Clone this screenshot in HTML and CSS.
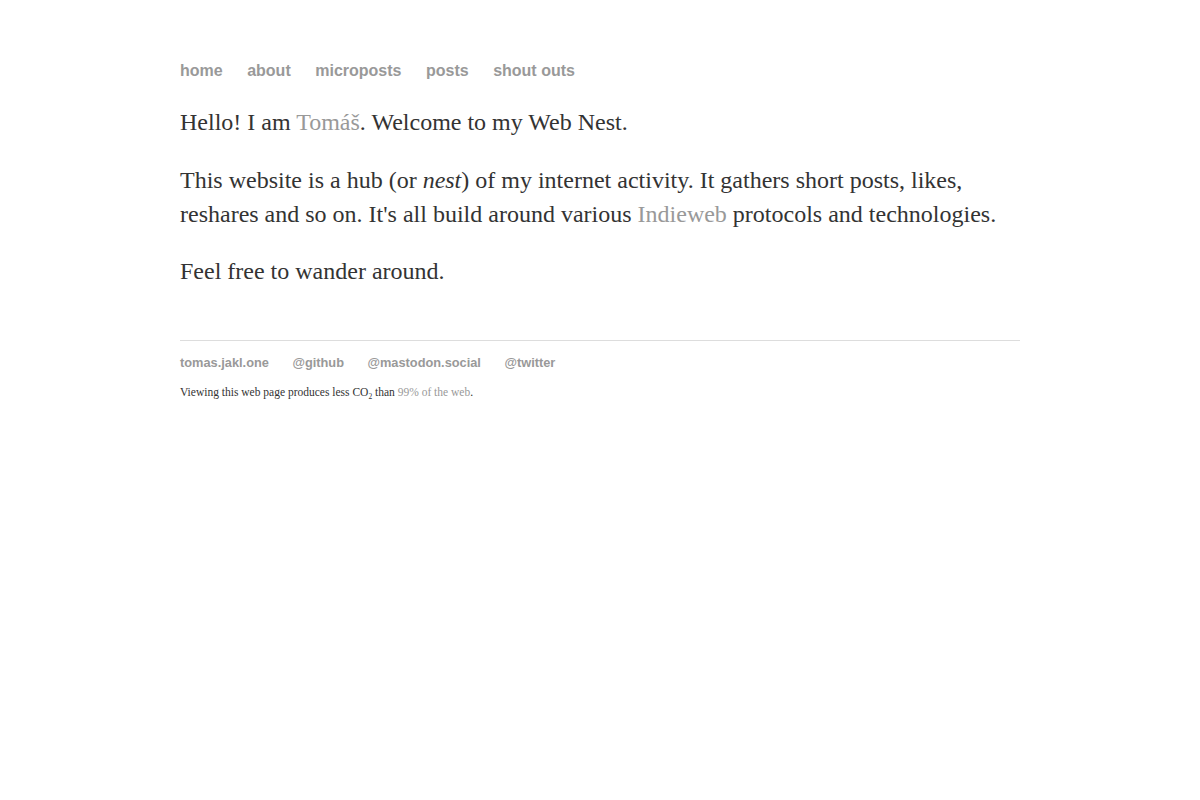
FILE: index.html
```html
<!DOCTYPE html>
<html lang="en">
<head>
<meta charset="utf-8">
<title>Tomáš's Web Nest</title>
<link rel="stylesheet" href="styles.css">
</head>
<body>
<div class="page">
  <nav class="nav">
    <a href="#">home</a>
    <a href="#">about</a>
    <a href="#">microposts</a>
    <a href="#">posts</a>
    <a href="#">shout outs</a>
  </nav>
  <main class="content">
    <p>Hello! I am <a href="#">Tomáš</a>. Welcome to my Web Nest.</p>
    <p class="hub">This website is a hub (or <em>nest</em>) of my internet activity. It gathers short posts, likes, reshares and so on. It's all build around various <a href="#">Indieweb</a> protocols and technologies.</p>
    <p class="last">Feel free to wander around.</p>
  </main>
  <footer class="footer">
    <div class="footer-links">
      <a href="#">tomas.jakl.one</a>
      <a href="#">@github</a>
      <a href="#">@mastodon.social</a>
      <a href="#">@twitter</a>
    </div>
    <p class="carbon">Viewing this web page produces less CO<sub>2</sub> than <a href="#">99% of the web</a>.</p>
  </footer>
</div>
</body>
</html>
```

FILE: styles.css
```css
html, body {
  margin: 0;
  padding: 0;
  background: #fff;
}
.page {
  width: 840px;
  margin: 0 auto;
  padding-top: 61px;
}
a {
  color: #999;
  text-decoration: none;
}
.nav {
  display: flex;
  gap: 24.5px;
  font-family: "Liberation Sans", Arial, sans-serif;
  font-weight: bold;
  font-size: 16px;
  line-height: 20px;
}
.nav a {
  color: #999;
}
.content {
  font-family: "Liberation Serif", "Times New Roman", serif;
  font-size: 24px;
  line-height: 34px;
  color: #333;
  margin-top: 24px;
}
.content p {
  margin: 0 0 24px 0;
}
.content .hub {
  margin-bottom: 23px;
}
.content .last {
  margin-bottom: 23px;
}
.footer {
  margin-top: 52px;
  border-top: 1px solid #ddd;
  padding-top: 14px;
}
.footer-links {
  display: flex;
  gap: 23.5px;
  font-family: "Liberation Sans", Arial, sans-serif;
  font-weight: bold;
  font-size: 12.8px;
  line-height: 16px;
}
.carbon {
  margin: 13px 0 0 0;
  font-family: "Liberation Serif", "Times New Roman", serif;
  font-size: 11.5px;
  line-height: 16px;
  color: #333;
}
.carbon sub {
  font-size: 7.5px;
  line-height: 0;
}
.carbon a {
  color: #999;
}
```
